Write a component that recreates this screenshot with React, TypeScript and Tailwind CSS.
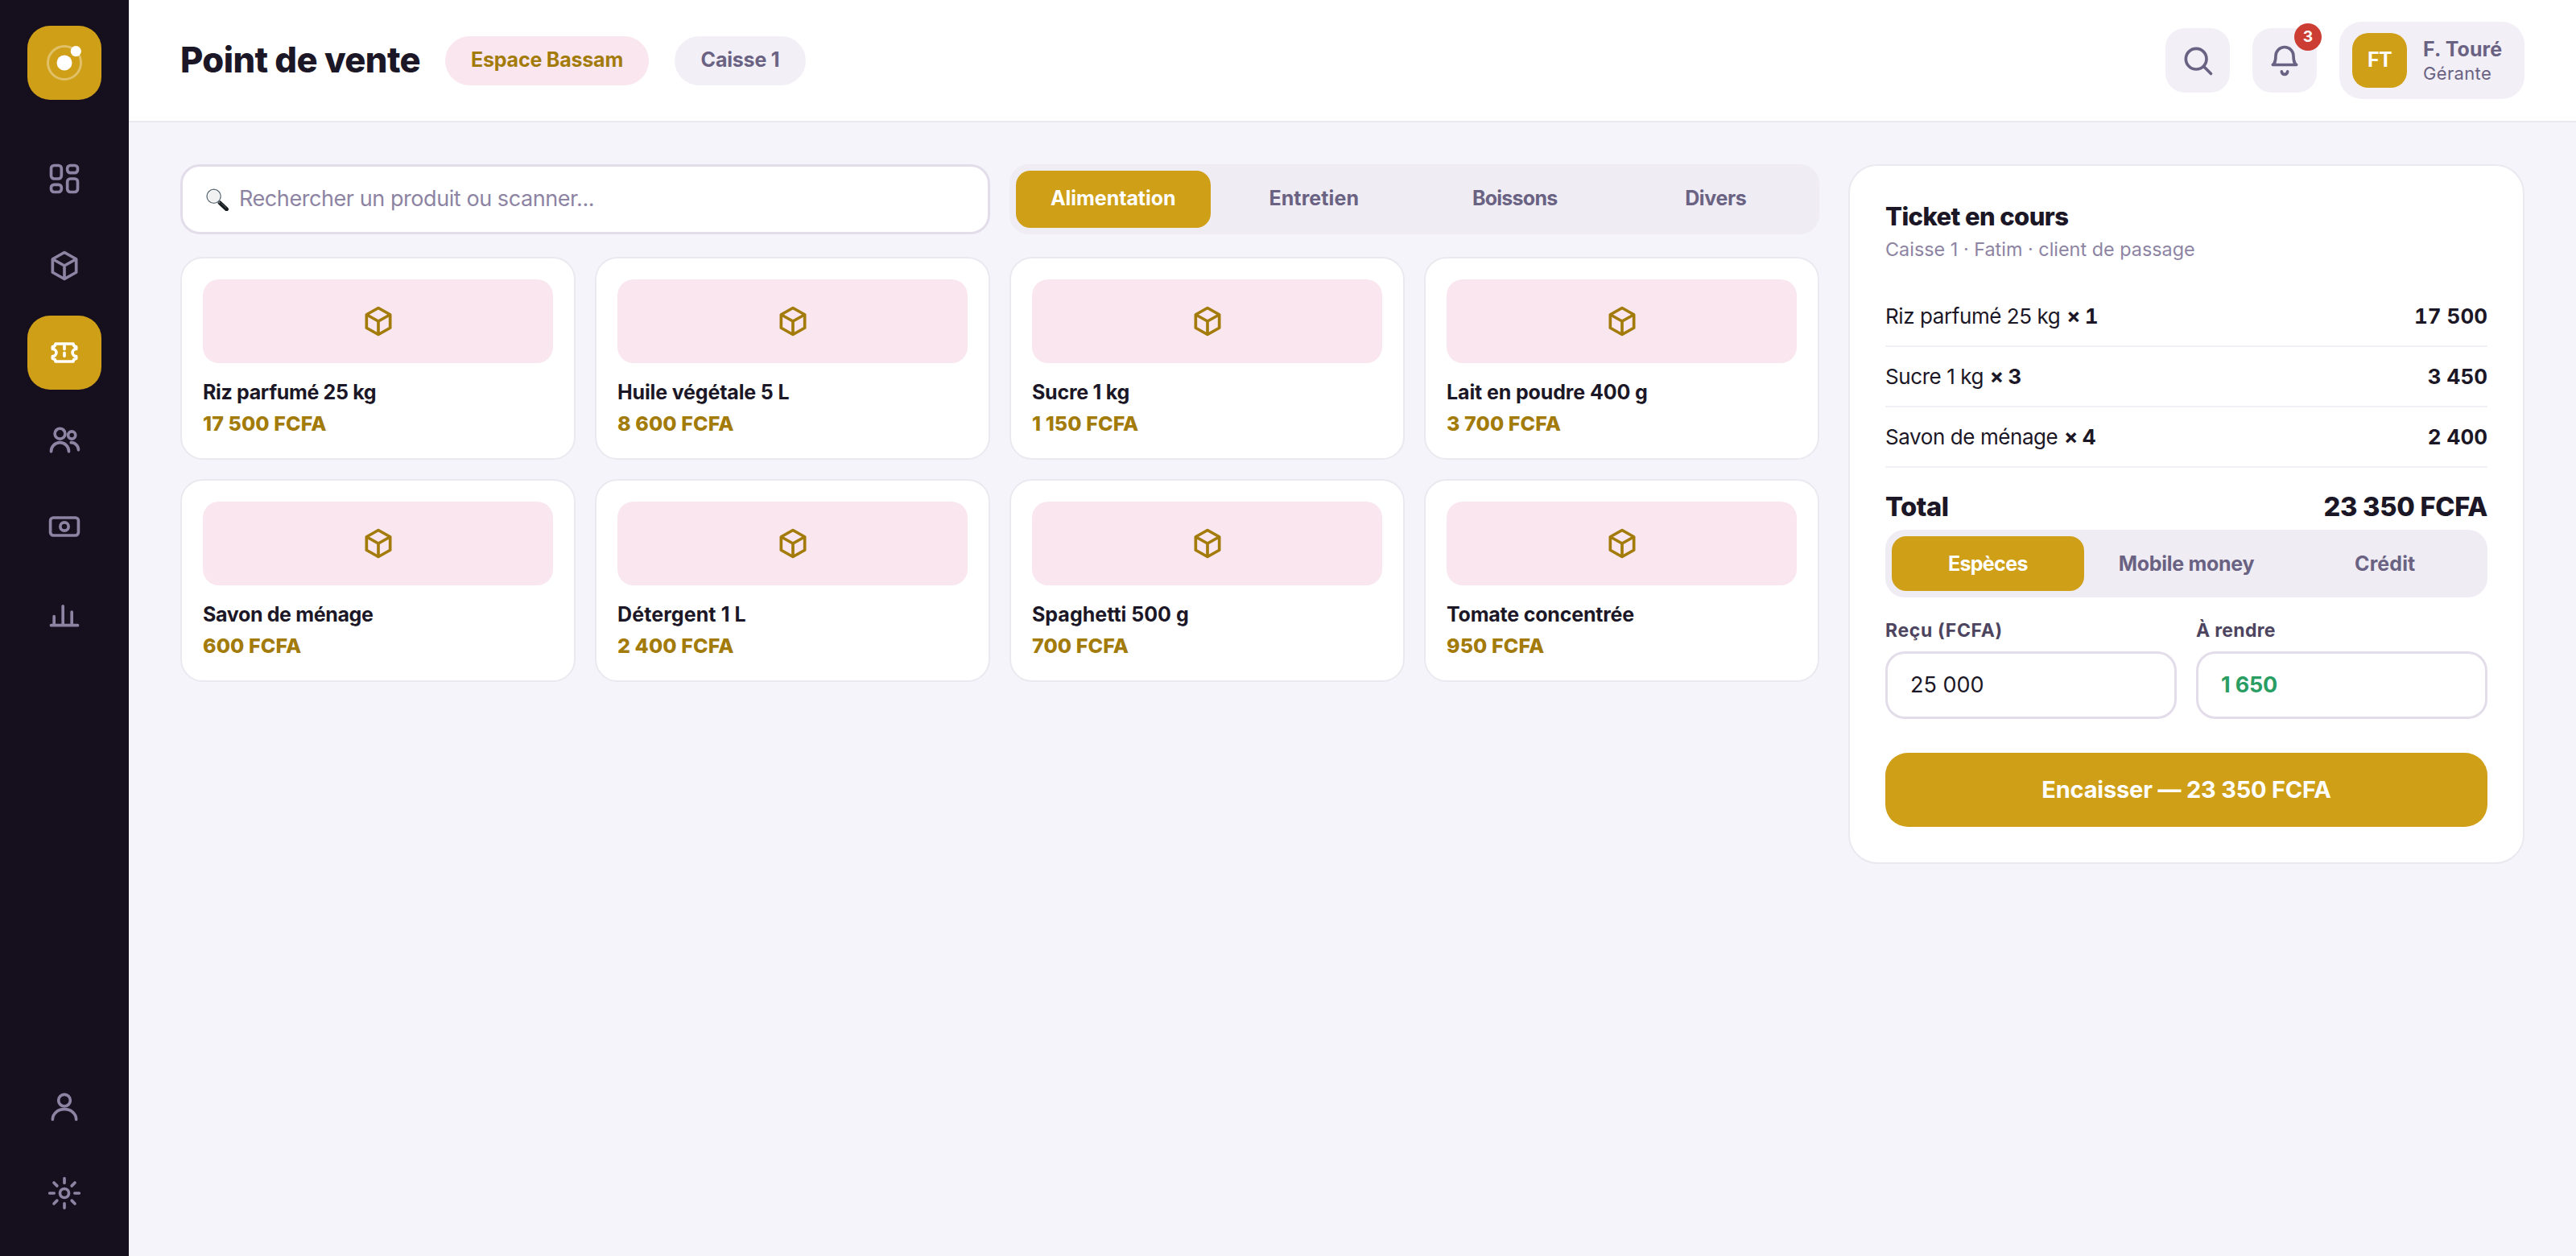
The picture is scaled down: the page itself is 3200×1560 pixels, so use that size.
import React from "react";

type IconProps = { className?: string; children: React.ReactNode };

function Icon({ className = "", children }: IconProps) {
  return (
    <svg
      viewBox="0 0 24 24"
      fill="none"
      stroke="currentColor"
      strokeWidth="2"
      strokeLinecap="round"
      strokeLinejoin="round"
      className={`h-11 w-11 shrink-0 ${className}`}
    >
      {children}
    </svg>
  );
}

const DashboardIcon = () => (
  <Icon>
    <rect x="3" y="3" width="7" height="9" rx="2" />
    <rect x="14" y="3" width="7" height="5" rx="2" />
    <rect x="14" y="12" width="7" height="9" rx="2" />
    <rect x="3" y="16" width="7" height="5" rx="2" />
  </Icon>
);

const BoxIcon = () => (
  <Icon>
    <path d="M12 3l8 4.5v9L12 21l-8-4.5v-9L12 3z" />
    <path strokeLinecap="butt" strokeLinejoin="miter" d="M4 7.5l8 4.5 8-4.5M12 12v9" />
  </Icon>
);

const TicketIcon = () => (
  <Icon>
    <path d="M4 8a2 2 0 0 0 2-2h12a2 2 0 0 0 2 2v1.5a2.5 2.5 0 0 0 0 5V16a2 2 0 0 0-2 2H6a2 2 0 0 0-2-2v-1.5a2.5 2.5 0 0 0 0-5z" />
    <path d="M12 6.3v3.2M12 12.2v2.1" />
  </Icon>
);

const UsersIcon = () => (
  <Icon>
    <circle cx="9" cy="8" r="3.5" />
    <path d="M3 20a6 6 0 0 1 12 0" />
    <circle cx="17" cy="9" r="2.5" />
    <path d="M16.5 14a5 5 0 0 1 5 5" />
  </Icon>
);

const CashIcon = () => (
  <Icon>
    <rect x="2.5" y="6" width="19" height="12" rx="2" />
    <circle cx="12" cy="12" r="2.8" />
  </Icon>
);

const ChartIcon = () => (
  <Icon>
    <path d="M3 20h18M5 20v-6M11 20V7M17 20v-9" />
  </Icon>
);

const PersonIcon = () => (
  <Icon>
    <circle cx="12" cy="8" r="4" />
    <path d="M4 21a8 7 0 0 1 16 0" />
  </Icon>
);

const SunIcon = () => (
  <Icon>
    <circle cx="12" cy="12" r="3" />
    <path d="M12 2v3M12 19v3M2 12h3M19 12h3M4.9 4.9L7 7M17 17l2.1 2.1M4.9 19.1L7 17M17 7l2.1-2.1" />
  </Icon>
);

const SearchIcon = () => (
  <Icon>
    <circle cx="11" cy="11" r="7" />
    <path d="M21 21l-4.5-4.5" />
  </Icon>
);

const BellIcon = () => (
  <Icon>
    <path d="M6 9a6 6 0 0 1 12 0c0 5 2 6 2 6H4s2-1 2-6" />
    <path d="M10 19.5a2 2 0 0 0 4 0" />
  </Icon>
);

function Logo() {
  return (
    <svg viewBox="0 0 92 92" className="h-[92px] w-[92px] shrink-0 rounded-[28px] bg-[#cf9f17]">
      <circle cx="46" cy="46" r="20.5" fill="none" stroke="#fff" strokeOpacity="0.35" strokeWidth="3" />
      <circle cx="46" cy="46" r="9.5" fill="#fff" />
      <circle cx="60.3" cy="31.7" r="6.6" fill="#fff" />
    </svg>
  );
}

// Small magnifying glass with a glass lens and a dark handle.
function Magnifier() {
  return (
    <svg viewBox="0 0 28 28" className="ml-px h-7 w-7 shrink-0">
      <path d="M17.2 18l8.2 7.8" stroke="#15191c" strokeWidth="5" strokeLinecap="round" />
      <path d="M19 18.6l6 5.7" stroke="#59636a" strokeWidth="1" strokeLinecap="round" />
      <path d="M15 16l2.2 2.1" stroke="#6b757b" strokeWidth="1.8" />
      <circle cx="9.6" cy="9.8" r="8.5" fill="#f1f1f2" stroke="#5f6d76" strokeWidth="1.5" />
      <circle cx="9.6" cy="9.8" r="7.4" fill="none" stroke="#fff" strokeWidth="0.8" />
    </svg>
  );
}

function NavItem({ active = false, children }: { active?: boolean; children: React.ReactNode }) {
  return (
    <a
      className={`flex h-[92px] w-[92px] items-center justify-center rounded-[28px] ${
        active ? "bg-[#cf9f17] text-white" : "text-[#8d84a3]"
      }`}
    >
      {children}
    </a>
  );
}

function Sidebar() {
  return (
    <nav className="flex w-40 shrink-0 flex-col items-center bg-[#16101e] py-8">
      <Logo />
      <div className="mt-[52px] flex flex-1 flex-col gap-4">
        <NavItem><DashboardIcon /></NavItem>
        <NavItem><BoxIcon /></NavItem>
        <NavItem active><TicketIcon /></NavItem>
        <NavItem><UsersIcon /></NavItem>
        <NavItem><CashIcon /></NavItem>
        <NavItem><ChartIcon /></NavItem>
        <div className="flex-1" />
        <NavItem><PersonIcon /></NavItem>
        <NavItem><SunIcon /></NavItem>
      </div>
    </nav>
  );
}

function Header() {
  return (
    <header className="flex h-[152px] shrink-0 items-center whitespace-nowrap border-b-2 border-[#ebe9f0] bg-white px-16">
      <h1 className="w-[297px] text-[43.5px] font-extrabold leading-none tracking-[-0.6px]">Point de vente</h1>
      <span className="ml-8 flex h-[61px] w-[253px] items-center justify-center rounded-full bg-[#f9e6ee] text-[25px] font-[650] tracking-[-0.2px] text-[#a37b0a]">
        Espace Bassam
      </span>
      <span className="ml-8 flex h-[61px] w-[163px] items-center justify-center rounded-full bg-[#f2eff7] text-[25px] font-[650] tracking-[-0.2px] text-[#6a6282]">
        Caisse 1
      </span>
      <div className="ml-auto flex items-center gap-7">
        <button className="flex h-20 w-20 items-center justify-center rounded-3xl bg-[#f2eff7] text-[#6a6282]">
          <SearchIcon />
        </button>
        <button className="relative flex h-20 w-20 items-center justify-center rounded-3xl bg-[#f2eff7] text-[#6a6282]">
          <BellIcon />
          <span className="absolute -right-1.5 -top-1.5 flex h-[34px] w-[34px] items-center justify-center rounded-full bg-[#cc3d33] text-[19.3px] font-bold leading-none text-white">
            3
          </span>
        </button>
        <div className="flex h-24 w-[230px] items-center gap-5 rounded-[28px] bg-[#f2eff7] pl-4 text-[#6a6282]">
          <span className="flex h-[68px] w-[68px] items-center justify-center rounded-[20px] bg-[#cf9f17] text-[25px] font-bold tracking-[-0.8px] text-white">
            FT
          </span>
          <span className="flex flex-col items-start pt-0.5">
            <span className="text-[25px] font-[650] leading-[31px] tracking-[0.1px]">F. Touré</span>
            <span className="text-[22px] leading-[29px] tracking-[0.35px]">Gérante</span>
          </span>
        </div>
      </div>
    </header>
  );
}

type Label = { text: string; tracking: string };

function Segments({ items }: { items: Label[] }) {
  return (
    <div className="flex gap-2 rounded-3xl bg-[#efecf4] p-2 text-[25px] font-[650] text-[#6a6282]">
      {items.map(({ text, tracking }, i) => (
        <button
          key={text}
          className={`flex min-h-[68px] flex-1 basis-0 items-start justify-center whitespace-nowrap rounded-[18px] leading-[68px] ${tracking} ${
            i === 0 ? "bg-[#cf9f17] text-white" : ""
          }`}
        >
          {text}
        </button>
      ))}
    </div>
  );
}

const categories: Label[] = [
  { text: "Alimentation", tracking: "tracking-[-0.05px]" },
  { text: "Entretien", tracking: "tracking-[0.1px]" },
  { text: "Boissons", tracking: "tracking-[-0.75px]" },
  { text: "Divers", tracking: "tracking-[-0.4px]" },
];

const payments: Label[] = [
  { text: "Espèces", tracking: "tracking-[-0.65px]" },
  { text: "Mobile money", tracking: "tracking-[-0.3px]" },
  { text: "Crédit", tracking: "tracking-[0.1px]" },
];

const products = [
  { name: "Riz parfumé 25 kg", price: "17 500 FCFA", tracking: "tracking-[-0.35px]" },
  { name: "Huile végétale 5 L", price: "8 600 FCFA", tracking: "tracking-[-0.15px]" },
  { name: "Sucre 1 kg", price: "1 150 FCFA", tracking: "tracking-[-0.25px]" },
  { name: "Lait en poudre 400 g", price: "3 700 FCFA", tracking: "tracking-[-0.12px]" },
  { name: "Savon de ménage", price: "600 FCFA", tracking: "tracking-[-0.35px]" },
  { name: "Détergent 1 L", price: "2 400 FCFA", tracking: "tracking-[0.1px]" },
  { name: "Spaghetti 500 g", price: "700 FCFA", tracking: "tracking-[0px]" },
  { name: "Tomate concentrée", price: "950 FCFA", tracking: "tracking-[-0.2px]" },
];

function ProductCard({ name, price, tracking }: { name: string; price: string; tracking: string }) {
  return (
    <article className="flex h-[252px] flex-col items-start whitespace-nowrap rounded-[28px] border-2 border-[#ebe9f0] bg-white p-[26px]">
      <div className="flex h-[104px] w-full items-center justify-center rounded-[20px] bg-[#f9e6ee] text-[#a37b0a]">
        <BoxIcon />
      </div>
      <h3 className={`mt-[17px] text-[25px] font-[650] leading-[39px] ${tracking}`}>{name}</h3>
      <p className="mt-[3px] text-[25px] font-extrabold leading-[32px] tracking-[0.1px] text-[#a37b0a]">{price}</p>
    </article>
  );
}

const lines = [
  { name: "Riz parfumé 25 kg", qty: "× 1", amount: "17 500" },
  { name: "Sucre 1 kg", qty: "× 3", amount: "3 450" },
  { name: "Savon de ménage", qty: "× 4", amount: "2 400" },
];

function Ticket() {
  return (
    <aside className="flex w-[840px] shrink-0 flex-col self-start whitespace-nowrap rounded-[36px] border-2 border-[#ebe9f0] bg-white p-11">
      <h2 className="text-[31px] font-extrabold leading-[38px] tracking-[-0.6px]">Ticket en cours</h2>
      <p className="mt-1 text-[23.4px] leading-[35px] text-[#8d84a3]">Caisse 1 · Fatim · client de passage</p>
      <div className="mt-[29px]">
        {lines.map(({ name, qty, amount }) => (
          <div key={name} className="flex h-[75px] items-center justify-between border-b-2 border-[#f2f0f6] text-[26px]">
            <span className="flex gap-2">
              <span className="tracking-[-0.42px]">{name}</span>
              <b className="font-bold tabular-nums tracking-[-0.7px]">{qty}</b>
            </span>
            <b className="font-bold tabular-nums tracking-[0px]">{amount}</b>
          </div>
        ))}
      </div>
      <div className="flex h-[77px] items-center justify-between pt-[19px] text-[32.7px] font-extrabold leading-none">
        <span className="tracking-[-0.5px]">Total</span>
        <span className="tracking-[-0.3px]">23 350 FCFA</span>
      </div>
      <Segments items={payments} />
      <div className="mt-[23px] grid grid-cols-2 gap-6">
        <label className="flex flex-col gap-2">
          <span className="text-[23px] font-[650] leading-9 tracking-[0.65px] text-[#4d4560]">Reçu (FCFA)</span>
          <span className="flex h-[84px] items-center rounded-3xl border-[3px] border-[#e3ddea] px-7 text-[27px]">25 000</span>
        </label>
        <label className="flex flex-col gap-2">
          <span className="text-[23px] font-[650] leading-9 tracking-[0.3px] text-[#4d4560]">À rendre</span>
          <span className="flex h-[84px] items-center rounded-3xl border-[3px] border-[#e3ddea] px-7 text-[27px] font-bold tracking-[-0.2px] text-[#2a9d62]">
            1 650
          </span>
        </label>
      </div>
      <button className="mt-[42px] flex h-[92px] items-center justify-center rounded-[28px] bg-[#cf9f17] text-[29px] font-bold tracking-[-0.2px] text-white">
        Encaisser — 23 350 FCFA
      </button>
    </aside>
  );
}

export default function App() {
  return (
    <div className="flex h-[1560px] w-[3200px] overflow-hidden bg-[#f5f4fa] font-['Inter',sans-serif] text-[#1c1726]">
      <Sidebar />
      <div className="flex min-w-0 flex-1 flex-col">
        <Header />
        <main className="flex gap-9 px-16 pt-[52px]">
          <section className="flex min-w-0 flex-1 flex-col gap-7">
            <div className="grid grid-cols-2 gap-6">
              <div className="flex h-[87px] items-center whitespace-nowrap rounded-3xl border-[3px] border-[#e3ddea] bg-white pl-7 text-[27px] text-[#8d84a3]">
                <Magnifier />
                <span className="ml-[13px] tracking-[-0.43px]">Rechercher un produit ou scanner...</span>
              </div>
              <Segments items={categories} />
            </div>
            <div className="grid grid-cols-4 gap-6">
              {products.map((product) => (
                <ProductCard key={product.name} {...product} />
              ))}
            </div>
          </section>
          <Ticket />
        </main>
      </div>
    </div>
  );
}
